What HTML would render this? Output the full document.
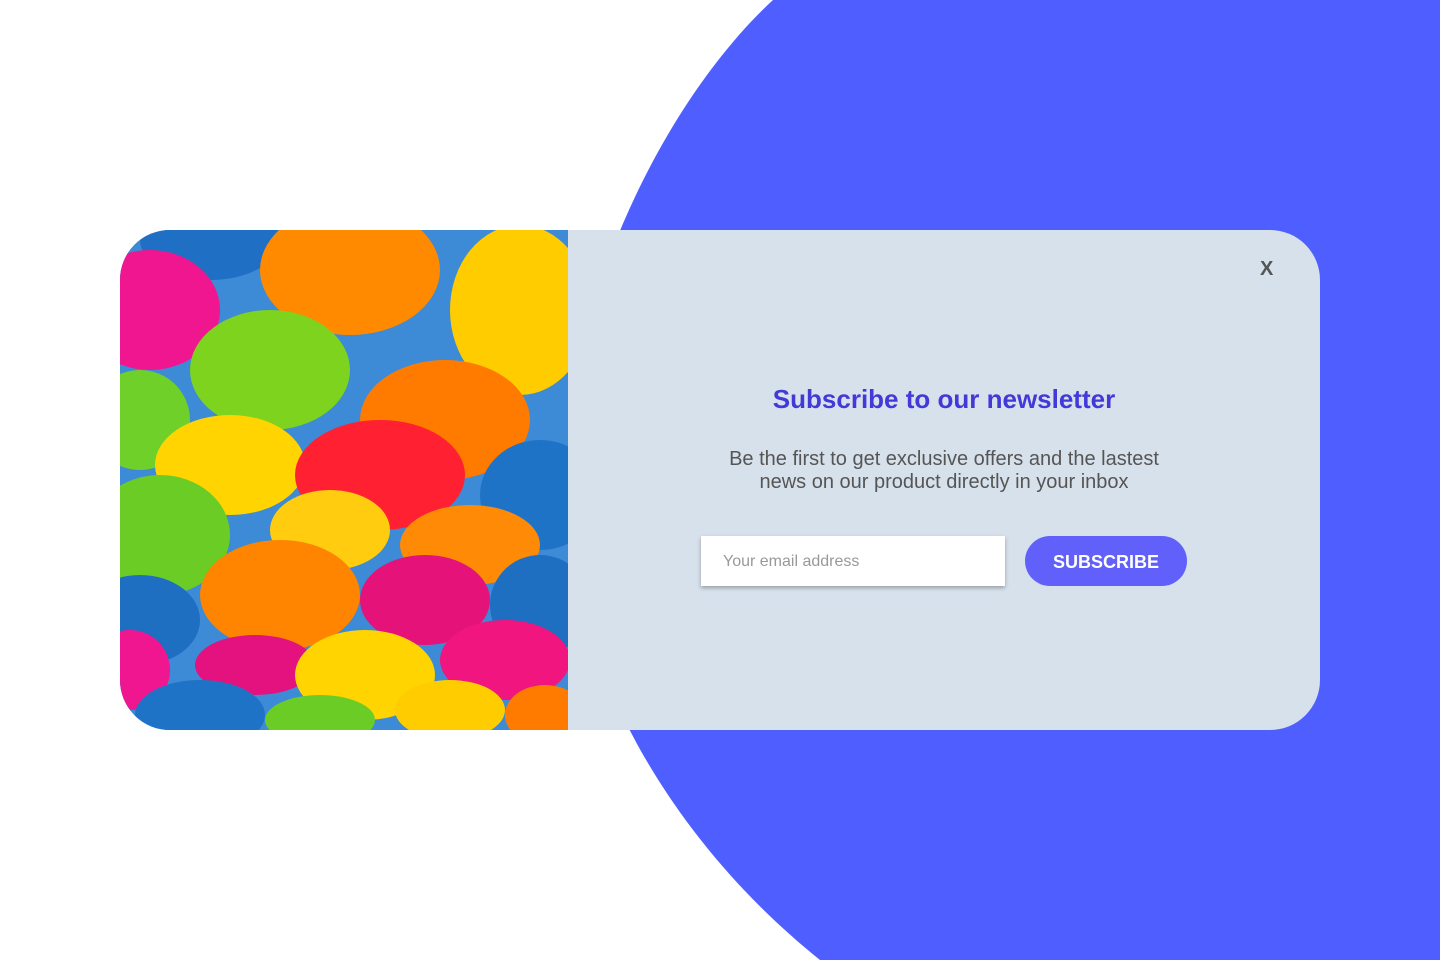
<!DOCTYPE html>
<html><head><style>
body{margin:0;width:1440px;height:960px;position:relative;overflow:hidden;background:#fff;font-family:"Liberation Sans",sans-serif}
.bg{position:absolute;left:0;top:0}
.card{position:absolute;left:120px;top:230px;width:1200px;height:500px;border-radius:50px;overflow:hidden;background:#d7e1ec}
.img{position:absolute;left:0;top:0;width:448px;height:500px;background:#3d8ad6}
h1{position:absolute;left:448px;right:0;top:154px;margin:0;text-align:center;color:#4338d8;font-size:26px;font-weight:bold}
p{position:absolute;left:448px;right:0;top:218px;margin:0;text-align:center;color:#555;font-size:20px;line-height:23px}
.x{position:absolute;left:1140px;top:28px;color:#555;font-size:20px;font-weight:bold}
.in{position:absolute;left:581px;top:306px;width:304px;height:50px;background:#fff;box-shadow:0 2px 4px rgba(0,0,0,.3);color:#999;font-size:16px;line-height:52px;box-sizing:border-box;padding-left:22px}
.btn{position:absolute;left:905px;top:306px;width:162px;height:50px;border-radius:25px;background:#6160fb;color:#fff;font-weight:bold;font-size:18px;line-height:52px;text-align:center}
</style></head><body>
<svg class="bg" width="1440" height="960"><path d="M773,0 C670,95 568,290 565,480 C565,660 670,840 820,960 L1440,960 L1440,0 Z" fill="#4f5fff"/></svg>
<div class="card">
<svg class="img" width="448" height="500">
<rect width="448" height="500" fill="#3d8ad6"/>
<ellipse cx="90" cy="10" rx="70" ry="40" fill="#1f6fc4"/>
<ellipse cx="230" cy="40" rx="90" ry="65" fill="#ff8a00"/>
<ellipse cx="400" cy="80" rx="70" ry="85" fill="#ffcc00"/>
<ellipse cx="30" cy="80" rx="70" ry="60" fill="#f0168f"/>
<ellipse cx="150" cy="140" rx="80" ry="60" fill="#7ed31f"/>
<ellipse cx="20" cy="190" rx="50" ry="50" fill="#6fd02a"/>
<ellipse cx="325" cy="190" rx="85" ry="60" fill="#ff7b00"/>
<ellipse cx="110" cy="235" rx="75" ry="50" fill="#ffd400"/>
<ellipse cx="260" cy="245" rx="85" ry="55" fill="#ff2131"/>
<ellipse cx="420" cy="265" rx="60" ry="55" fill="#1f73c7"/>
<ellipse cx="40" cy="305" rx="70" ry="60" fill="#6bcc26"/>
<ellipse cx="210" cy="300" rx="60" ry="40" fill="#ffcc10"/>
<ellipse cx="350" cy="315" rx="70" ry="40" fill="#ff8a05"/>
<ellipse cx="160" cy="365" rx="80" ry="55" fill="#ff8400"/>
<ellipse cx="305" cy="370" rx="65" ry="45" fill="#e5127a"/>
<ellipse cx="20" cy="390" rx="60" ry="45" fill="#1e6fc2"/>
<ellipse cx="420" cy="375" rx="50" ry="50" fill="#1e6fc2"/>
<ellipse cx="135" cy="435" rx="60" ry="30" fill="#e3127e"/>
<ellipse cx="245" cy="445" rx="70" ry="45" fill="#ffd400"/>
<ellipse cx="385" cy="430" rx="65" ry="40" fill="#f0157f"/>
<ellipse cx="10" cy="440" rx="40" ry="40" fill="#f0168f"/>
<ellipse cx="80" cy="485" rx="65" ry="35" fill="#1f73c7"/>
<ellipse cx="200" cy="490" rx="55" ry="25" fill="#6bcc26"/>
<ellipse cx="330" cy="480" rx="55" ry="30" fill="#ffcc00"/>
<ellipse cx="425" cy="485" rx="40" ry="30" fill="#ff7b00"/>
</svg>
<div class="x">X</div>
<h1>Subscribe to our newsletter</h1>
<p>Be the first to get exclusive offers and the lastest<br>news on our product directly in your inbox</p>
<div class="in">Your email address</div>
<div class="btn">SUBSCRIBE</div>
</div>
</body></html>
